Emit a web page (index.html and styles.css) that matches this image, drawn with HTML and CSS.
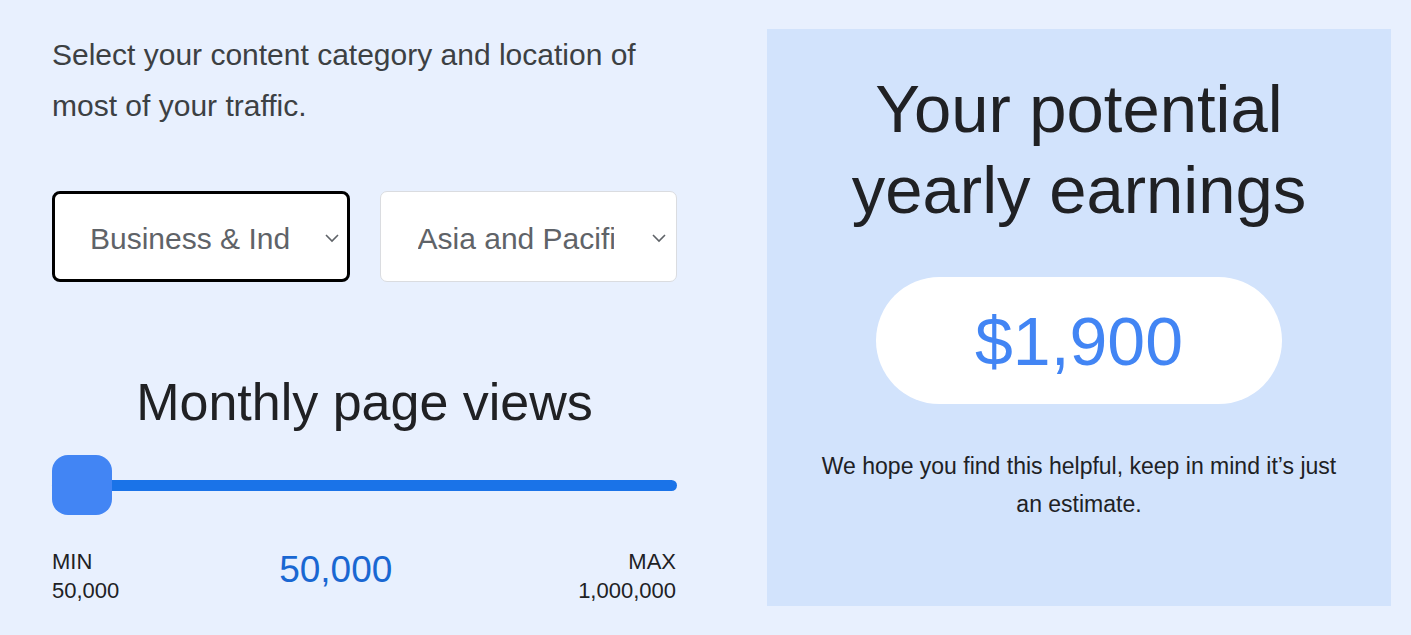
FILE: index.html
```html
<!DOCTYPE html>
<html lang="en">
<head>
<meta charset="utf-8">
<title>Earnings calculator</title>
<link rel="stylesheet" href="styles.css">
</head>
<body>
<main class="page">
  <section class="left">
    <p class="intro">Select your content category and location of most of your traffic.</p>
    <div class="selects">
      <div class="select-wrap">
        <select class="select select-focused">
          <option>Business &amp; Industrial</option>
        </select>
        <svg class="chev" width="16" height="10" viewBox="0 0 16 10"><path d="M2 2 L8 8 L14 2" fill="none" stroke="#5f6368" stroke-width="1.6"/></svg>
      </div>
      <div class="select-wrap">
        <select class="select">
          <option>Asia and Pacific</option>
        </select>
        <svg class="chev" width="16" height="10" viewBox="0 0 16 10"><path d="M2 2 L8 8 L14 2" fill="none" stroke="#5f6368" stroke-width="1.6"/></svg>
      </div>
    </div>
    <h2 class="views-title">Monthly page views</h2>
    <input class="range" type="range" min="50000" max="1000000" value="50000" step="50000">
    <div class="labels">
      <div class="label">
        <span>MIN</span>
        <span>50,000</span>
      </div>
      <div class="current">50,000</div>
      <div class="label label-right">
        <span>MAX</span>
        <span>1,000,000</span>
      </div>
    </div>
  </section>
  <section class="panel">
    <h1 class="panel-title">Your potential yearly earnings</h1>
    <div class="pill">$1,900</div>
    <p class="note">We hope you find this helpful, keep in mind it’s just an estimate.</p>
  </section>
</main>
</body>
</html>
```

FILE: styles.css
```css
* { box-sizing: border-box; }

html, body {
  margin: 0;
  padding: 0;
  background: #e8f0fe;
  font-family: "Liberation Sans", Arial, sans-serif;
}

.page {
  display: flex;
  align-items: stretch;
  gap: 90px;
  padding: 29px 20px 29px 52px;
  height: 635px;
}

.left {
  width: 625px;
  flex: none;
}

.intro {
  margin: 0;
  font-size: 30px;
  line-height: 51px;
  color: #3c4043;
}

.selects {
  display: flex;
  gap: 30px;
  margin-top: 60px;
}

.select-wrap {
  position: relative;
  flex: 1;
}

.select {
  -webkit-appearance: none;
  appearance: none;
  width: 100%;
  height: 91px;
  margin: 0;
  padding: 3px 62px 0 37px;
  border: 1px solid #dadce0;
  border-radius: 7px;
  background: #fff;
  font-family: "Liberation Sans", Arial, sans-serif;
  font-size: 30px;
  color: #5f6368;
  outline: none;
}

.select-focused {
  border: 3px solid #000;
  border-radius: 8px;
  padding-left: 35px;
  padding-right: 58px;
}

.chev {
  position: absolute;
  right: 10px;
  top: 42px;
  pointer-events: none;
}

.select-wrap:first-child .chev {
  right: 10px;
}

.views-title {
  margin: 90px 0 0;
  font-size: 52px;
  font-weight: normal;
  text-align: center;
  color: #202124;
  line-height: 60px;
}

.range {
  -webkit-appearance: none;
  appearance: none;
  display: block;
  width: 100%;
  height: 60px;
  margin: 23px 0 0;
  background: transparent;
}

.range::-webkit-slider-runnable-track {
  height: 11px;
  background: #1a73e8;
  border-radius: 6px;
}

.range::-webkit-slider-thumb {
  -webkit-appearance: none;
  appearance: none;
  width: 60px;
  height: 60px;
  margin-top: -24.5px;
  border-radius: 16px;
  background: #4285f4;
  border: none;
}

.labels {
  display: flex;
  justify-content: space-between;
  align-items: flex-start;
  margin-top: 32px;
}

.label {
  display: flex;
  flex-direction: column;
  font-size: 22px;
  line-height: 29px;
  color: #202124;
}

.label-right {
  align-items: flex-end;
  margin-right: 1px;
}

.current {
  font-size: 37px;
  color: #1967d2;
  margin-top: 2px;
  margin-right: 26px;
}

.panel {
  width: 624px;
  flex: none;
  background: #d2e3fc;
  padding: 39px 50px 0;
  text-align: center;
  display: flex;
  flex-direction: column;
  align-items: center;
}

.panel-title {
  margin: 0;
  font-size: 67px;
  font-weight: normal;
  line-height: 81px;
  color: #202124;
}

.pill {
  margin-top: 47px;
  width: 406px;
  height: 127px;
  border-radius: 64px;
  background: #fff;
  color: #4285f4;
  font-size: 68px;
  display: flex;
  align-items: center;
  justify-content: center;
}

.note {
  margin: 43px 0 0;
  font-size: 23px;
  line-height: 38px;
  color: #202124;
}
```
